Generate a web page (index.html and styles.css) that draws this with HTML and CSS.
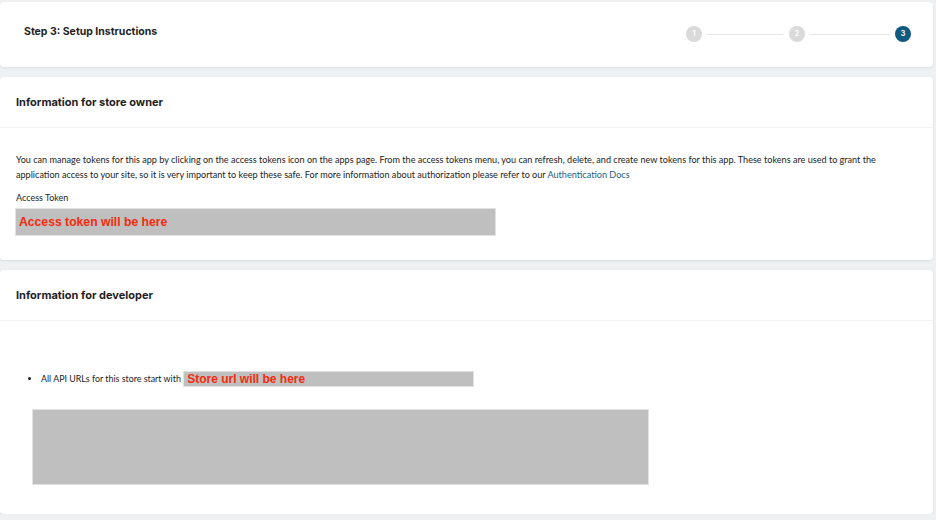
FILE: index.html
```html
<!DOCTYPE html>
<html>
<head>
<meta charset="UTF-8">
<title>Setup Instructions</title>
<link rel="stylesheet" href="styles.css">
</head>
<body>
<div class="page">
	<div class="card step_card">
		<div class="step_title">Step 3: Setup Instructions</div>
		<div class="stepper">
			<span class="dot">1</span>
			<span class="line first"></span>
			<span class="dot">2</span>
			<span class="line"></span>
			<span class="dot active">3</span>
		</div>
	</div>

	<div class="card owner_card">
		<div class="card_head">Information for store owner</div>
		<div class="card_body">
			<p class="desc">You can manage tokens for this app by clicking on the access tokens icon on the apps page. From the access tokens menu, you can refresh, delete, and create new tokens for this app. These tokens are used to grant the application access to your site, so it is very important to keep these safe. For more information about authorization please refer to our <a href="#">Authentication Docs</a></p>
			<div class="label">Access Token</div>
			<div class="token_box">Access token will be here</div>
		</div>
	</div>

	<div class="card dev_card">
		<div class="card_head">Information for developer</div>
		<div class="card_body">
			<ul class="api_list">
				<li>All API URLs for this store start with <span class="url_box">Store url will be here</span></li>
			</ul>
			<div class="code_box"></div>
		</div>
	</div>
</div>
</body>
</html>
```

FILE: styles.css
```css
body {
	margin: 0;
	background-color: #eef0f2;
	font-family: "Lato", "Open Sans", sans-serif;
	color: #222;
}
.page {
	width: 933px;
	padding-top: 2px;
}
.card {
	background-color: #fff;
	border-radius: 4px;
	box-shadow: 0 1px 3px rgba(0, 0, 0, 0.08);
}
.step_card {
	height: 65px;
	display: flex;
	justify-content: space-between;
	align-items: flex-start;
	padding: 0 22px 0 24px;
	box-sizing: border-box;
}
.step_title {
	margin-top: 22px;
	font-family: "Inter", sans-serif;
	font-weight: 700;
	font-size: 10.5px;
	line-height: 16px;
	color: #1e1e24;
}
.stepper {
	display: flex;
	align-items: center;
	margin-top: 24px;
}
.dot {
	width: 16px;
	height: 16px;
	border-radius: 50%;
	background-color: #dadada;
	color: #fff;
	font-family: "Inter", sans-serif;
	font-weight: 700;
	font-size: 7px;
	line-height: 16px;
	text-align: center;
}
.dot.active {
	background-color: #0e5a80;
}
.line {
	width: 80px;
	height: 1px;
	margin: 0 5px;
	background-color: #e6e6e6;
}
.line.first {
	width: 76px;
	margin-right: 6px;
}
.owner_card {
	margin-top: 10px;
	height: 183px;
}
.dev_card {
	margin-top: 10px;
	height: 244px;
}
.card_head {
	height: 51px;
	box-sizing: border-box;
	padding: 18px 16px 0;
	border-bottom: 1px solid #f2f2f2;
	font-family: "Inter", sans-serif;
	font-weight: 700;
	font-size: 11px;
	line-height: 15px;
	color: #1e1e24;
}
.card_body {
	padding: 24px 16px 0;
}
.desc {
	margin: 0;
	max-width: 880px;
	font-size: 9.1px;
	line-height: 15px;
}
.desc a {
	color: #1a5f8a;
	text-decoration: none;
}
.label {
	margin-top: 8px;
	font-size: 9px;
	line-height: 15px;
}
.token_box {
	margin: 3px 0 0 -1px;
	width: 481px;
	height: 28px;
	box-sizing: border-box;
	padding-left: 3px;
	background-color: #bfbfbf;
	border: 1px solid #e2e2e2;
	color: #f52a0c;
	font-family: "Liberation Sans", Arial, sans-serif;
	font-weight: 700;
	font-size: 12.2px;
	line-height: 26px;
}
.api_list {
	margin: 26px 0 0;
	padding-left: 25px;
	font-size: 8.9px;
	line-height: 16px;
}
.url_box {
	display: inline-block;
	vertical-align: top;
	width: 291px;
	height: 16px;
	box-sizing: border-box;
	padding-left: 3px;
	background-color: #bfbfbf;
	border: 1px solid #e2e2e2;
	color: #f52a0c;
	font-family: "Liberation Sans", Arial, sans-serif;
	font-weight: 700;
	font-size: 12px;
	line-height: 15px;
}
.code_box {
	margin: 22px 0 0 16px;
	width: 617px;
	height: 76px;
	background-color: #bfbfbf;
	border: 1px solid #e2e2e2;
	box-sizing: border-box;
}
```
